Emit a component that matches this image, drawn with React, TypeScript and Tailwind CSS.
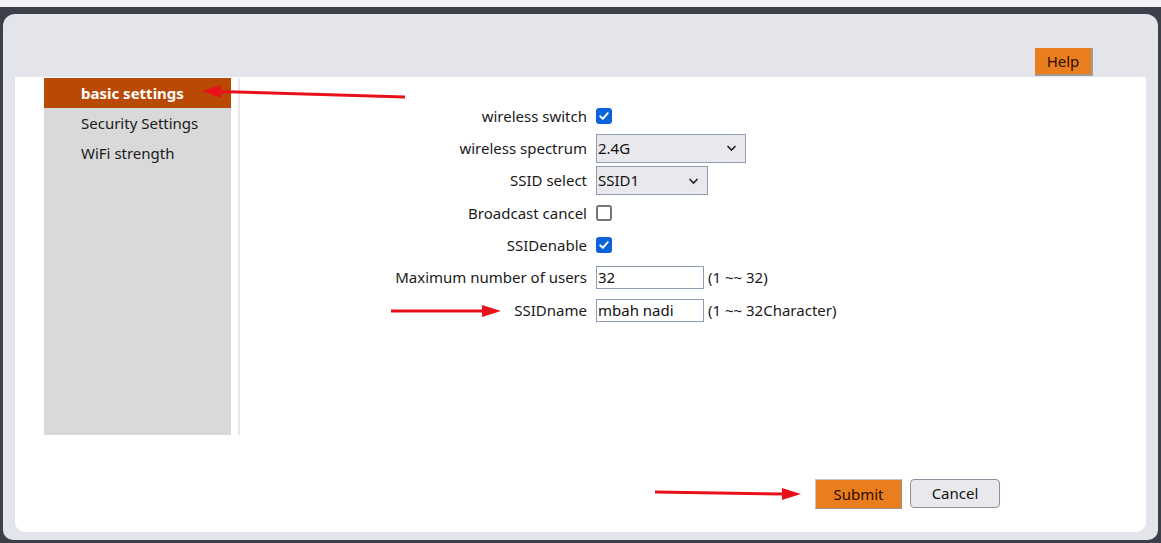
import React from 'react';

const font = { fontFamily: '"Noto Sans", "Open Sans", Arial, sans-serif' };

const Checkbox = ({ checked }: { checked: boolean }) =>
  checked ? (
    <div className="w-[16px] h-[16px] rounded-[3px] bg-[#0a63d8] flex items-center justify-center">
      <svg width="12" height="12" viewBox="0 0 12 12">
        <path d="M2.2 6.3 L4.8 8.8 L9.8 3.2" fill="none" stroke="#fff" strokeWidth="1.9" strokeLinecap="round" strokeLinejoin="round" />
      </svg>
    </div>
  ) : (
    <div className="w-[16px] h-[16px] rounded-[3px] border-2 border-[#767676] bg-white" />
  );

const Select = ({ value, width }: { value: string; width: string }) => (
  <div className={`${width} h-[29px] bg-[#e9e9ed] border border-[#8f9db3] flex items-center justify-between pl-[1px] pr-[8px] text-[15px] text-[#111]`}>
    <span>{value}</span>
    <svg width="11" height="8" viewBox="0 0 11 8">
      <path d="M1.5 2 L5.5 6 L9.5 2" fill="none" stroke="#222" strokeWidth="1.6" />
    </svg>
  </div>
);

const TextInput = ({ value }: { value: string }) => (
  <div className="w-[108px] h-[23px] border border-[#8f9db3] bg-white flex items-center pl-[1px] text-[15px] text-[#111]">
    {value}
  </div>
);

const rows: { label: string; h: string; control: React.ReactNode; hint?: string }[] = [
  { label: 'wireless switch', h: 'h-[32px]', control: <Checkbox checked /> },
  { label: 'wireless spectrum', h: 'h-[32px]', control: <Select value="2.4G" width="w-[150px]" /> },
  { label: 'SSID select', h: 'h-[33px]', control: <Select value="SSID1" width="w-[112px]" /> },
  { label: 'Broadcast cancel', h: 'h-[32px]', control: <Checkbox checked={false} /> },
  { label: 'SSIDenable', h: 'h-[32px]', control: <Checkbox checked /> },
  { label: 'Maximum number of users', h: 'h-[33px]', control: <TextInput value="32" />, hint: '(1 ~~ 32)' },
  { label: 'SSIDname', h: 'h-[32px]', control: <TextInput value="mbah nadi" />, hint: '(1 ~~ 32Character)' },
];

const menu = ['basic settings', 'Security Settings', 'WiFi strength'];

export default function App() {
  return (
    <div className="relative w-[1161px] h-[543px] bg-[#3d404b] flex flex-col overflow-hidden" style={font}>
      <div className="h-[7px] bg-[#f2f2f4] shrink-0" />
      <div className="mt-[7px] mx-[3px] h-[526px] rounded-t-[12px] rounded-b-[10px] bg-[#e4e5ea] px-[12px] pb-[8px] flex flex-col">
        {/* header */}
        <div className="h-[63px] shrink-0 flex items-end justify-end pr-[53px]">
          <button className="w-[58px] h-[28px] mb-[1px] bg-[#ea7d1d] border-r-2 border-b-2 border-[#a39c95] text-[15px] text-[#2a0d00] flex items-center justify-center">
            Help
          </button>
        </div>

        {/* body */}
        <div className="flex-1 bg-white rounded-b-[10px] flex flex-col">
          <div className="flex pt-[1px]">
            <div className="ml-[29px] w-[187px] h-[357px] bg-[#d9d9d9] flex flex-col">
              {menu.map((m, i) => (
                <div
                  key={m}
                  className={`h-[30px] flex items-center pl-[37px] text-[15px] ${
                    i === 0 ? 'bg-[#b84a06] text-white font-bold' : 'text-[#1a1a1a]'
                  }`}
                >
                  {m}
                </div>
              ))}
            </div>
            <div className="ml-[7px] w-[2px] h-[357px] bg-[#e6e7ec]" />

            <div className="pt-[22px] flex flex-col">
              {rows.map((r) => (
                <div key={r.label} className={`${r.h} flex items-center`}>
                  <div className="w-[356px] text-right text-[15px] text-[#1a1a1a] pr-[9px]">{r.label}</div>
                  {r.control}
                  {r.hint && <span className="ml-[4px] text-[15px] text-[#1a1a1a]">{r.hint}</span>}
                </div>
              ))}
            </div>
          </div>

          <div className="mt-[44px] flex gap-[8px] pl-[800px]">
            <button className="w-[87px] h-[30px] bg-[#ea7d1d] border border-t-[#c9c4bf] border-l-[#c9c4bf] border-r-[#9a948f] border-b-[#9a948f] text-[15px] text-[#2a0d00] flex items-center justify-center">
              Submit
            </button>
            <button className="w-[90px] h-[29px] bg-[#e9e9ed] border border-[#8f8f9d] rounded-[4px] text-[15px] text-[#111] flex items-center justify-center">
              Cancel
            </button>
          </div>
        </div>
      </div>

      {/* annotation arrows */}
      <svg className="absolute left-0 top-0 pointer-events-none" width="1161" height="543">
        <line x1="405" y1="97" x2="218" y2="91.5" stroke="#e8111a" strokeWidth="3" />
        <polygon points="202,91 221,85 221,98" fill="#e8111a" />
        <line x1="391" y1="311" x2="484" y2="311" stroke="#e8111a" strokeWidth="3" />
        <polygon points="501,311 482,305 482,317" fill="#e8111a" />
        <line x1="655" y1="492" x2="784" y2="494" stroke="#e8111a" strokeWidth="3" />
        <polygon points="801,494 782,488 782,500" fill="#e8111a" />
      </svg>
    </div>
  );
}
